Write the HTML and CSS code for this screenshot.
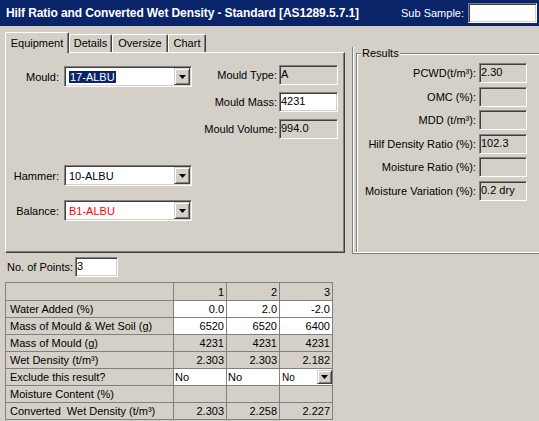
FILE: index.html
```html
<!DOCTYPE html>
<html lang="en">
<head>
  <meta charset="UTF-8">
  <title>Hilf Ratio and Converted Wet Density</title>
  <link rel="stylesheet" href="styles.css">
</head>
<body>
  <div class="titlebar">
    <h1 class="title">Hilf Ratio and Converted Wet Density - Standard [AS1289.5.7.1]</h1>
    <label class="sub-sample">Sub Sample: <span class="box white sub-input"></span></label>
  </div>

  <div class="main">
    <div class="tabset">
      <div class="tabs">
        <div class="tab active tab-equipment">Equipment</div>
        <div class="tab tab-details">Details</div>
        <div class="tab tab-oversize">Oversize</div>
        <div class="tab tab-chart">Chart</div>
      </div>
      <div class="panel">
        <div class="equip-top">
          <div class="field mould-field">
            <label>Mould:</label>
            <div class="combo">
              <span class="combo-text"><span class="selected">17-ALBU</span></span>
              <span class="combo-btn"><svg width="7" height="4" viewBox="0 0 7 4"><path d="M0 0h7L3.5 4z"/></svg></span>
            </div>
          </div>
          <div class="mould-info">
            <label>Mould Type:</label>
            <span class="box">A</span>
            <label>Mould Mass:</label>
            <span class="box white">4231</span>
            <label>Mould Volume:</label>
            <span class="box">994.0</span>
          </div>
        </div>
        <div class="field hammer-field">
          <label>Hammer:</label>
          <div class="combo">
            <span class="combo-text">10-ALBU</span>
            <span class="combo-btn"><svg width="7" height="4" viewBox="0 0 7 4"><path d="M0 0h7L3.5 4z"/></svg></span>
          </div>
        </div>
        <div class="field balance-field">
          <label>Balance:</label>
          <div class="combo">
            <span class="combo-text warn">B1-ALBU</span>
            <span class="combo-btn"><svg width="7" height="4" viewBox="0 0 7 4"><path d="M0 0h7L3.5 4z"/></svg></span>
          </div>
        </div>
      </div>
    </div>

    <div class="results-panel">
      <fieldset class="results">
        <legend>Results</legend>
        <div class="results-grid">
          <label>PCWD(t/m³):</label>
          <span class="box">2.30</span>
          <label>OMC (%):</label>
          <span class="box"></span>
          <label>MDD (t/m³):</label>
          <span class="box"></span>
          <label>Hilf Density Ratio (%):</label>
          <span class="box">102.3</span>
          <label>Moisture Ratio (%):</label>
          <span class="box"></span>
          <label>Moisture Variation (%):</label>
          <span class="box">0.2 dry</span>
        </div>
      </fieldset>
    </div>
  </div>

  <div class="points">
    <label>No. of Points:</label>
    <span class="box white points-input">3</span>
  </div>

  <div class="grid">
    <div class="head"></div>
    <div class="head num">1</div>
    <div class="head num">2</div>
    <div class="head num">3</div>

    <div>Water Added (%)</div>
    <div class="num in">0.0</div>
    <div class="num in">2.0</div>
    <div class="num in">-2.0</div>

    <div>Mass of Mould &amp; Wet Soil (g)</div>
    <div class="num in">6520</div>
    <div class="num in">6520</div>
    <div class="num in">6400</div>

    <div>Mass of Mould (g)</div>
    <div class="num">4231</div>
    <div class="num">4231</div>
    <div class="num">4231</div>

    <div>Wet Density (t/m³)</div>
    <div class="num">2.303</div>
    <div class="num">2.303</div>
    <div class="num">2.182</div>

    <div>Exclude this result?</div>
    <div class="in pick">No</div>
    <div class="in pick">No</div>
    <div class="in pick pick-open">
      <span class="pick-text">No</span>
      <span class="combo-btn cell-btn"><svg width="7" height="4" viewBox="0 0 7 4"><path d="M0 0h7L3.5 4z"/></svg></span>
    </div>

    <div>Moisture Content (%)</div>
    <div></div>
    <div></div>
    <div></div>

    <div>Converted&nbsp; Wet Density (t/m³)</div>
    <div class="num">2.303</div>
    <div class="num">2.258</div>
    <div class="num">2.227</div>
  </div>
</body>
</html>
```

FILE: styles.css
```css
* {
  box-sizing: border-box;
}

body {
  margin: 0;
  width: 539px;
  height: 421px;
  overflow: hidden;
  background: #d4d0c8;
  color: #000;
  font: 11px "Liberation Sans", Arial, sans-serif;
}

/* title bar */
.titlebar {
  display: flex;
  align-items: center;
  height: 26px;
  padding: 0 2px 0 6px;
  background: #0a246a;
  color: #fff;
}

.title {
  margin: 0;
  font-size: 12px;
  font-weight: bold;
  letter-spacing: -0.1px;
  white-space: nowrap;
}

.sub-sample {
  display: flex;
  align-items: center;
  gap: 4px;
  margin-left: auto;
}

.sub-input {
  width: 69px;
}

/* sunken boxes */
.box {
  display: block;
  height: 20px;
  padding: 0 0 0 1px;
  border: 1px solid;
  border-color: #808080 #fff #fff #808080;
  box-shadow: inset 1px 1px #404040, inset -1px -1px #d4d0c8;
  background: #d4d0c8;
  color: #000;
  line-height: 17px;
  white-space: nowrap;
}

.box.white {
  background: #fff;
}

/* combos */
.combo {
  display: flex;
  align-items: center;
  width: 128px;
  height: 21px;
  padding: 1px;
  border: 1px solid;
  border-color: #808080 #fff #fff #808080;
  box-shadow: inset 1px 1px #404040, inset -1px -1px #d4d0c8;
  background: #fff;
}

.combo-text {
  flex: 1;
  padding-left: 3px;
}

.selected {
  background: #0a246a;
  color: #fff;
  padding: 0 1px;
}

.warn {
  color: #f00;
}

.combo-btn {
  display: flex;
  align-items: center;
  justify-content: center;
  width: 16px;
  height: 17px;
  border: 1px solid;
  border-color: #d4d0c8 #404040 #404040 #d4d0c8;
  box-shadow: inset 1px 1px #fff, inset -1px -1px #808080;
  background: #d4d0c8;
}

/* tabs */
.main {
  display: flex;
  align-items: flex-start;
  height: 228px;
}

.tabset {
  flex-shrink: 0;
  width: 340px;
  margin: 6px 0 0 5px;
}

.tabs {
  display: flex;
  align-items: flex-end;
  height: 20px;
}

.tab {
  height: 18px;
  line-height: 17px;
  text-align: center;
  border-top: 1px solid #fff;
  border-left: 1px solid #fff;
  border-right: 1px solid #404040;
  border-radius: 2px 2px 0 0;
  box-shadow: inset -1px 0 #808080;
}

.tab.active {
  position: relative;
  height: 21px;
  margin-bottom: -1px;
  line-height: 20px;
  background: #d4d0c8;
}

.tab-equipment { width: 64px; }
.tab-details { width: 43px; }
.tab-oversize { width: 56px; }
.tab-chart { width: 38px; }

.panel {
  height: 201px;
  padding: 12px 6px 0 0;
  border-top: 1px solid #fff;
  border-left: 1px solid #fff;
  border-right: 1px solid #404040;
  border-bottom: 1px solid #404040;
  box-shadow: inset -1px -1px #808080;
}

.equip-top {
  display: flex;
  justify-content: space-between;
  align-items: flex-start;
}

.field {
  display: grid;
  grid-template-columns: 53px 128px;
  column-gap: 5px;
  align-items: center;
}

.field label {
  text-align: right;
}

.mould-field {
  margin-top: 1px;
}

.hammer-field {
  margin-top: 26px;
}

.balance-field {
  margin-top: 14px;
}

.mould-info {
  display: grid;
  grid-template-columns: auto 59px;
  grid-auto-rows: 20px;
  column-gap: 2px;
  row-gap: 7px;
  align-items: center;
}

.mould-info label,
.results-grid label {
  justify-self: end;
}

/* results */
.results-panel {
  flex-shrink: 0;
  width: 200px;
  height: 207px;
  margin: 21px 0 0 7px;
  overflow: hidden;
  border-left: 1px solid #808080;
  border-bottom: 1px solid #808080;
  box-shadow: inset 1px -1px #fff;
}

.results {
  width: 210px;
  height: 205px;
  margin: 0 0 0 3px;
  padding: 3px 0 0 0;
  border: 1px solid #808080;
  border-bottom: none;
  box-shadow: inset 1px 1px #fff;
}

.results legend {
  margin-left: 4px;
  padding: 0 1px;
  line-height: 13px;
  background: #d4d0c8;
}

.results-grid {
  display: grid;
  grid-template-columns: 119px 48px;
  grid-auto-rows: 20px;
  column-gap: 3px;
  row-gap: 3.6px;
  align-items: center;
}

/* points */
.points {
  display: flex;
  align-items: center;
  gap: 2px;
  margin: 3px 0 0 7px;
}

.points-input {
  width: 43px;
}

/* data grid */
.grid {
  display: grid;
  grid-template-columns: 168px 53px 53px 53px;
  grid-template-rows: 18px repeat(7, 17px);
  width: max-content;
  margin: 5px 0 0 5px;
  border-top: 1px solid #808080;
  border-left: 1px solid #808080;
}

.grid > div {
  display: flex;
  align-items: center;
  padding: 0 4px;
  border-right: 1px solid #808080;
  border-bottom: 1px solid #808080;
  background: #d4d0c8;
  white-space: nowrap;
  overflow: hidden;
}

.grid > .num {
  justify-content: flex-end;
  padding: 0 2px;
}

.grid > .in {
  background: #fff;
}

.grid > .pick {
  padding: 0 1px;
}

.grid > .pick-open {
  padding: 0 0 0 2px;
}

.pick-text {
  flex: 1;
  font-size: 10px;
}

.cell-btn {
  width: 15px;
  height: 14px;
}
```
